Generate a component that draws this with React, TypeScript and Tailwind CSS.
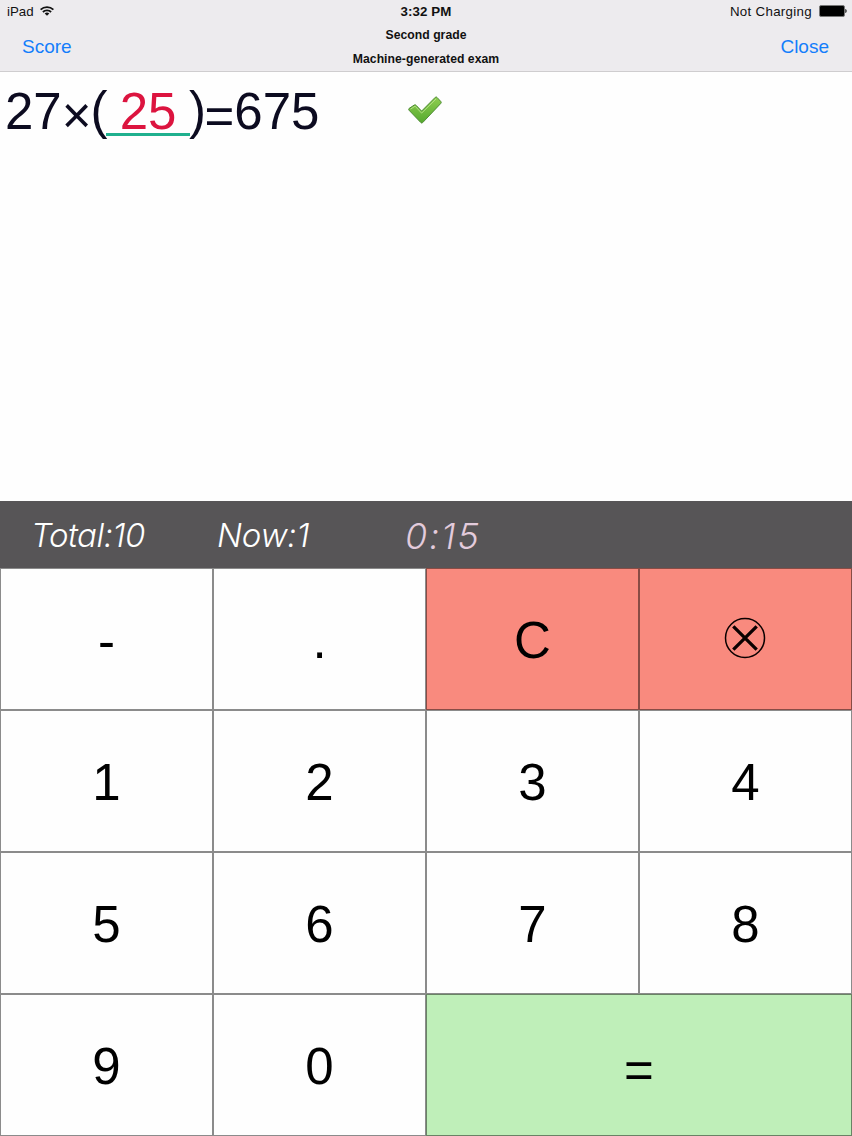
import type { ReactNode } from "react";

type KeyProps = { children: ReactNode; className?: string; label?: string };

function Key({ children, className = "bg-[#fefefe] pt-0.5", label }: KeyProps) {
  return (
    <button
      aria-label={label}
      className={`flex items-center justify-center border border-black/45 text-[51px] leading-none text-black ${className}`}
    >
      {children}
    </button>
  );
}

function WifiIcon() {
  return (
    <svg className="ml-[6px] h-[10px] w-[14px]" viewBox="0 0 14 10" fill="none" stroke="#111" strokeWidth="1.8">
      <path d="M.6 3.7a9.1 9.1 0 0 1 12.8 0" />
      <path d="M2.9 6a5.8 5.8 0 0 1 8.2 0" />
      <path d="M7 9.8 4.7 7.5a3.3 3.3 0 0 1 4.6 0Z" fill="#111" stroke="none" />
    </svg>
  );
}

function BatteryIcon() {
  return (
    <svg className="ml-[7px] h-[12px] w-[28px]" viewBox="0 0 28 12">
      <rect x=".5" y=".5" width="25" height="11" rx="1.5" fill="#000" stroke="#777" />
      <path d="M26.3 4c1 .4 1.3 1 1.3 2s-.3 1.6-1.3 2Z" fill="#111" />
    </svg>
  );
}

function CheckMark() {
  return (
    <svg className="h-[28px] w-[34px]" viewBox="0 0 34 28">
      <defs>
        <linearGradient id="leaf" x1="0" y1="0" x2="0" y2="1">
          <stop offset="0" stopColor="#8fce50" />
          <stop offset="1" stopColor="#55a92e" />
        </linearGradient>
      </defs>
      <path d="M1 12.5 6.3 9q1-.6 1.9.4l5.4 5.7L27.3 1.3q.9-.8 1.7.1l3.9 4.2q.7.9-.1 1.8L14.7 26.6q-1 1-1.9-.1L1 14.2Q.3 13.3 1 12.5Z" fill="url(#leaf)" stroke="#4f8c36" strokeWidth="1" />
      <path d="M2.5 13.1 7.1 10.2l6.5 6.9L28.1 2.9" fill="none" stroke="#b4e085" strokeWidth="1" />
    </svg>
  );
}

export default function App() {
  return (
    <div className="flex h-[1136px] w-[852px] flex-col overflow-hidden bg-[#fefefe] font-['Liberation_Sans',Arial,sans-serif]">
      <header className="flex h-[72px] flex-col border-b border-[#cfcdcf] bg-[#edebee] text-[#111]">
        <div className="grid h-[23px] grid-cols-3 items-center text-[13.3px] leading-none">
          <div className="flex items-center pl-[7px]">
            <span>iPad</span>
            <WifiIcon />
          </div>
          <div className="text-center font-bold tracking-[0.1px]">3:32 PM</div>
          <div className="flex items-center justify-end pr-[5px]">
            <span className="tracking-[0.31px]">Not Charging</span>
            <BatteryIcon />
          </div>
        </div>
        <div className="grid h-[48px] grid-cols-3 items-center">
          <button className="pl-[22px] text-left text-[19px] text-[#147efb]">Score</button>
          <div className="text-center text-[12.2px] font-bold leading-[24px] tracking-[0.03px]">
            <div>Second grade</div>
            <div>Machine-generated exam</div>
          </div>
          <button className="pr-[23px] text-right text-[19px] text-[#147efb]">Close</button>
        </div>
      </header>

      <main className="flex h-[429px] items-start pt-[11px]">
        <div className="flex h-[56px] w-[408px] items-start pl-[5px] text-[51px] leading-[58px] text-[#0c0b20]">
          <span>27</span>
          <span className="pt-1">×</span>
          <span className="-ml-px -mr-[1.5px] -mt-px">(</span>
          <span className="h-[53px] w-[84px] border-b-[3px] border-[#1fb08e] text-center text-[#dc143f]">25</span>
          <span className="-ml-px -mr-[1.5px] -mt-px">)</span>
          <span className="pt-[5px]">=</span>
          <span>675</span>
        </div>
        <div className="pt-[13px]">
          <CheckMark />
        </div>
      </main>

      <section className="flex h-[67px] items-center bg-[#575557] pt-0.5 font-['Inter','Liberation_Sans',sans-serif] text-[33px] font-light italic text-white">
        <div className="w-[185px] pl-[31px] tracking-[-0.5px]">Total:10</div>
        <div className="w-[188px] pl-[32px] tracking-[-0.2px]">Now:1</div>
        <div className="pl-[32px] text-[36px] font-light tracking-[2px] text-[#e3cbdc]">0:15</div>
      </section>

      <section className="grid flex-1 grid-cols-4 grid-rows-4">
        <Key className="bg-[#fefefe] pt-1">-</Key>
        <Key>.</Key>
        <Key className="bg-[#f98a7e] pt-0.5">C</Key>
        <Key className="bg-[#f98a7e] pb-0.5 pr-0.5" label="Delete">
          <svg className="h-[42px] w-[42px]" viewBox="0 0 42 42" fill="none" stroke="#0a0000">
            <circle cx="21" cy="21" r="19.5" strokeWidth="1.5" />
            <path d="m9.3 9.3 23.4 23.4m0-23.4-23.4 23.4" strokeWidth="3.3" />
          </svg>
        </Key>
        <Key>1</Key>
        <Key>2</Key>
        <Key>3</Key>
        <Key>4</Key>
        <Key>5</Key>
        <Key>6</Key>
        <Key>7</Key>
        <Key>8</Key>
        <Key>9</Key>
        <Key>0</Key>
        <Key className="col-span-2 bg-[#bfefb9] pt-2.5">=</Key>
      </section>
    </div>
  );
}
